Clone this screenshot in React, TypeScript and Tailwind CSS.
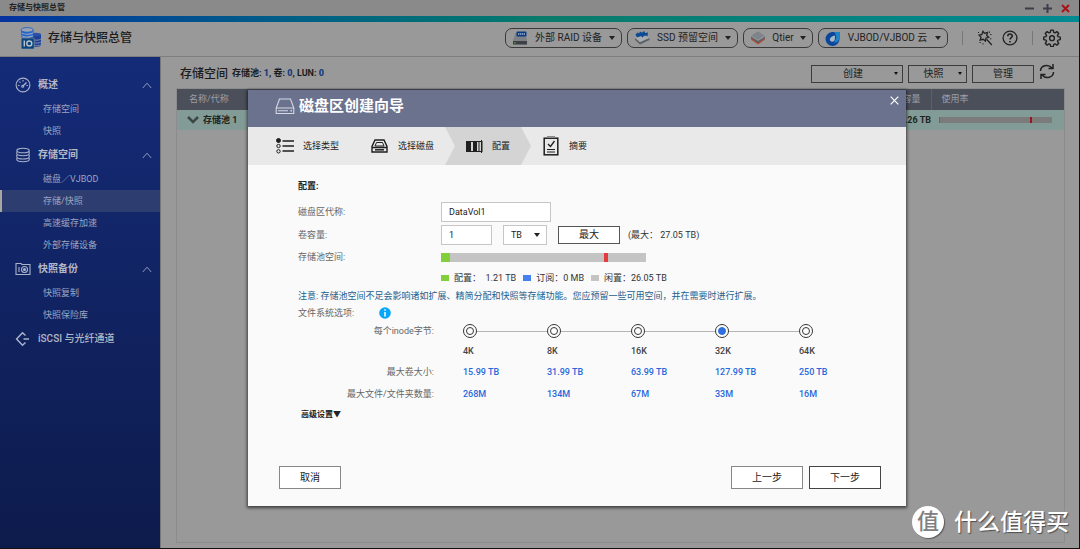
import React, { useState } from 'react';

/* ---------- icons ---------- */

const LogoIcon = () => (
  <svg width="22" height="23" viewBox="0 0 22 23" aria-hidden="true">
    <path d="M10 7v11c0 2.500 11 2.500 11 0V7z" fill="#1f3f94" />
    <ellipse cx="15.500" cy="7.500" rx="5.500" ry="1.800" fill="#2a4fa8" />
    <path d="M13 12.500c2 1 6 1 8-.5M14 15.500c2 .8 5 .8 7-.5M14 18.300c2 .8 5 .6 7-.6" stroke="#8793b3" fill="none" strokeWidth=".9" />
    <path d="M1 3v7.500h12.500V3z" fill="#2362c8" />
    <path d="M1.500 5.800c2 1.700 8 1.900 11.500.2M1.500 8.600c2 1.700 8 1.900 11.500.2" stroke="#97a9c4" fill="none" strokeWidth="1.100" />
    <ellipse cx="7.200" cy="2.900" rx="6.200" ry="2.300" fill="#9aa3b0" stroke="#2362c8" strokeWidth=".9" />
    <rect x="1.200" y="11" width="13" height="11" rx="1" fill="#08457c" stroke="#9098a2" strokeWidth=".6" />
    <path d="M4.300 13.500v6" stroke="#b9c2ca" strokeWidth="1.500" />
    <circle cx="9.300" cy="16.500" r="2.500" fill="none" stroke="#b9c2ca" strokeWidth="1.400" />
  </svg>
);

const GaugeIcon = () => (
  <svg width="16" height="16" viewBox="0 0 16 16" fill="none" stroke="#a9b2c9" strokeWidth="1.100" aria-hidden="true">
    <circle cx="8" cy="8" r="6.900" />
    <path d="M8 9l3.500-3.500" strokeWidth="1.400" />
    <circle cx="7.700" cy="9.300" r="1" />
    <path d="M3 8.500h1.500M4.500 4.700l1 1M8 3v1.400M11.500 8.500H13" />
  </svg>
);

const DiskStackIcon = () => (
  <svg width="16" height="16" viewBox="0 0 16 16" fill="none" stroke="#a9b2c9" strokeWidth="1.100" aria-hidden="true">
    <ellipse cx="8" cy="3.500" rx="6.200" ry="2.300" />
    <path d="M1.800 4.500v2c0 3 12.400 3 12.400 0v-2M1.800 7.800v2c0 3 12.400 3 12.400 0v-2M1.800 11v1.500c0 3 12.400 3 12.400 0V11" />
  </svg>
);

const SnapshotIcon = () => (
  <svg width="16" height="14" viewBox="0 0 16 14" fill="none" stroke="#a9b2c9" strokeWidth="1.100" aria-hidden="true">
    <path d="M1 12.500V1.500h5l1 1h8v10z" />
    <path d="M4 5v5" />
    <circle cx="9.500" cy="7.500" r="3" />
    <circle cx="9.500" cy="7.500" r="1" fill="#a9b2c9" />
  </svg>
);

const IscsiIcon = () => (
  <svg width="16" height="16" viewBox="0 0 16 16" fill="none" stroke="#a9b2c9" strokeWidth="1.500" aria-hidden="true">
    <path d="M10.500 4.500L7.500 1.800 1.600 8l5.900 6.200 3-2.700M8.500 8H14" />
  </svg>
);

const ChevronUp = () => (
  <svg width="10" height="7" viewBox="0 0 10 7" fill="none" stroke="#8d9abc" aria-hidden="true">
    <path d="M.8 6L5 1.200 9.200 6" />
  </svg>
);

const Caret = ({ className = '' }: { className?: string }) => (
  <svg width="6" height="4" viewBox="0 0 6 4" className={className} aria-hidden="true">
    <path d="M0 0h6L3 4z" fill="#222" />
  </svg>
);

const SmallCaret = () => (
  <svg width="4" height="3" viewBox="0 0 4 3" aria-hidden="true">
    <path d="M0 0h4L2 3z" fill="#111" />
  </svg>
);

const RaidIcon = () => (
  <svg width="16" height="14" viewBox="0 0 16 14" aria-hidden="true">
    <path d="M3.500 2h10L15 9.500v4H1v-4z" fill="#7d8187" />
    <path d="M1 10h14v3.500H1z" fill="#3d4145" />
    <rect x="4.500" y=".5" width="10" height="5" rx="1" fill="#0b3a80" />
    <path d="M6 3h7" stroke="#9fb2d0" strokeWidth="1.500" strokeDasharray="1.300 .6" />
    <path d="M2.200 11.800h1.500" stroke="#4fae35" strokeWidth="1.300" />
  </svg>
);

const SsdIcon = () => (
  <svg width="16" height="14" viewBox="0 0 16 14" aria-hidden="true">
    <path d="M1 9l5 4.500L15.500 9V7L6 11 1 7z" fill="#5d6268" />
    <path d="M1 6.500L9 5l6.500 1.500L6 11z" fill="#a9adb2" />
    <path d="M1.500 3.500l2-2 1.500 1 1-2 2 1.300L10 0l1.200 2L14 1.500 13.500 5l-3-.5-2 2-1.500-1.500L3 6.500z" fill="#0b4a94" />
  </svg>
);

const QtierIcon = () => (
  <svg width="16" height="14" viewBox="0 0 16 14" aria-hidden="true">
    <path d="M1 8.500L8 13.500l7-5V7L8 11.500 1 7z" fill="#b04a33" />
    <path d="M1 5.500v1.500l7 5 7-5V5.500L8 10z" fill="#5a5e65" />
    <path d="M1.500 4.500L8 .3l6.500 4.200L8 9z" fill="#7f838a" />
  </svg>
);

const VjbodIcon = () => (
  <svg width="15" height="15" viewBox="0 0 15 15" aria-hidden="true">
    <path d="M7 1h7.500v6.500A7 7 0 1 1 7 1z" fill="#0b459c" />
    <path d="M9 1h5.500v5c0 4-3 6-6 5.500C12 9 12 4 9 1z" fill="#1f83c4" />
    <path d="M10 4.500C6.500 5 4.500 7 5 9.300c.5 2 4 1.700 4.700-.3.400-1.500.3-3 .3-4.500z" fill="#a8b7c8" />
  </svg>
);

const WandIcon = () => (
  <svg width="16" height="16" viewBox="0 0 16 16" fill="none" stroke="#222" strokeWidth="1.300" aria-hidden="true">
    <path d="M6 1.300l1.500 2 3-.8-.8 2.800 2 2-2.700.8-.6 2.900-2.200-1.700-3 .8.900-2.800-2-2.200 2.800-.7zM9.800 9.500l5 5.500" />
    <path d="M12.500 1.500v1.300M14.500 4.500h-1.300M13 8.800h1.300M2.500 12.500h1.300M6 14.500v-1.300M1 2.500h1" strokeWidth="1" />
  </svg>
);

const HelpIcon = () => (
  <svg width="16" height="16" viewBox="0 0 16 16" fill="none" stroke="#222" strokeWidth="1.300" aria-hidden="true">
    <circle cx="8" cy="8" r="6.900" />
    <path d="M5.800 6.300c0-3 4.500-2.900 4.500-.2 0 1.500-2.300 1.700-2.300 3.500M8 11v1.500" strokeWidth="1.600" />
  </svg>
);

const GearIcon = () => (
  <svg width="18" height="18" viewBox="0 0 24 24" fill="none" stroke="#222" strokeWidth="1.900" strokeLinejoin="round" aria-hidden="true">
    <path d="M10.300 1.500h3.400l.6 3 1.700.7 2.600-1.700 2.400 2.400-1.700 2.600.7 1.700 3 .6v3.400l-3 .6-.7 1.700 1.700 2.600-2.400 2.400-2.600-1.700-1.700.7-.6 3h-3.400l-.6-3-1.700-.7-2.600 1.700L3 19.100l1.700-2.600-.7-1.700-3-.6v-3.400l3-.6.7-1.700L3 5.900l2.400-2.400L8 5.200l1.700-.7z" />
    <circle cx="12" cy="12.300" r="3.200" />
  </svg>
);

const RefreshIcon = () => (
  <svg width="16" height="17" viewBox="0 0 16 17" fill="none" stroke="#222" strokeWidth="1.500" aria-hidden="true">
    <path d="M1.500 8C1.500 2.500 9 .5 13 5M14 1v4.500H9.500M14.500 9c0 5.500-7.500 7.500-11.500 3M2 16v-4.500h4.500" />
  </svg>
);

const DriveIcon = () => (
  <svg width="20" height="17" viewBox="0 0 20 17" fill="none" stroke="#d5d9e6" strokeWidth="1.100" aria-hidden="true">
    <path d="M4.500 1h11l3.300 9v5.500H1.200V10zM1.200 10h17.600M3 12.800h10" />
    <path d="M15.500 12.800h1.500" strokeWidth="1.500" />
  </svg>
);

const ListIcon = () => (
  <svg width="18" height="16" viewBox="0 0 18 16" fill="none" stroke="#1f1f1f" aria-hidden="true">
    <circle cx="2.500" cy="2.500" r="2" fill="#1f1f1f" />
    <circle cx="2.500" cy="8" r="1.700" />
    <circle cx="2.500" cy="13.300" r="1.700" />
    <path d="M6.500 3H18M6.500 8H18M6.500 13H18" strokeWidth="1.600" />
  </svg>
);

const DiskSelectIcon = () => (
  <svg width="17" height="14" viewBox="0 0 17 14" fill="none" stroke="#1f1f1f" strokeWidth="1.400" aria-hidden="true">
    <path d="M4 1h9l3 6.500V13H1V7.500zM1 8.500h15" />
    <path d="M5.500 3.500h6l1.500 3.500H4z" strokeWidth="1" />
    <path d="M4 10.800h9" strokeWidth="1.500" />
  </svg>
);

const ConfigIcon = () => (
  <svg width="19" height="13" viewBox="0 0 19 13" aria-hidden="true">
    <rect x="1.500" y="1.500" width="15.500" height="10" fill="none" stroke="#1f1f1f" />
    <path d="M1 1h5v11H1zM8 1h4v11H8z" fill="#1f1f1f" />
    <path d="M14 1.500v10M16.500 0v13" stroke="#1f1f1f" strokeWidth="1" />
  </svg>
);

const SummaryIcon = () => (
  <svg width="16" height="20" viewBox="0 0 16 20" fill="none" stroke="#1f1f1f" aria-hidden="true">
    <rect x="1.200" y="2.200" width="13.600" height="16.600" strokeWidth="1.500" />
    <path d="M4 1h8" stroke="#8a8a8a" strokeWidth="2" />
    <path d="M5 8l2.500 2.500L11.500 5" strokeWidth="1.300" />
    <path d="M4 13.500h8M4 16h8" />
  </svg>
);

/* ---------- data ---------- */

const navGroups = [
  { title: '概述', icon: <GaugeIcon />, items: ['存储空间', '快照'], bold: true },
  { title: '存储空间', icon: <DiskStackIcon />, items: ['磁盘／VJBOD', '存储/快照', '高速缓存加速', '外部存储设备'], bold: true },
  { title: '快照备份', icon: <SnapshotIcon />, items: ['快照复制', '快照保险库'], bold: true },
  { title: 'iSCSI 与光纤通道', icon: <IscsiIcon />, items: [], bold: false },
];

const tools = [
  { label: '外部 RAID 设备', icon: <RaidIcon />, width: 'w-[117px]' },
  { label: 'SSD 预留空间', icon: <SsdIcon />, width: 'w-[111px]' },
  { label: 'Qtier', icon: <QtierIcon />, width: 'w-[70px]' },
  { label: 'VJBOD/VJBOD 云', icon: <VjbodIcon />, width: 'w-[130px]' },
];

const inodes = [
  { size: '4K', volume: '15.99 TB', files: '268M' },
  { size: '8K', volume: '31.99 TB', files: '134M' },
  { size: '16K', volume: '63.99 TB', files: '67M' },
  { size: '32K', volume: '127.99 TB', files: '33M' },
  { size: '64K', volume: '250 TB', files: '16M' },
];

const legend = [
  { label: '配置：  1.21 TB', color: 'bg-[#82cf3c]' },
  { label: '订阅：0 MB', color: 'bg-[#4480f0]' },
  { label: '闲置：26.05 TB', color: 'bg-[#c4c4c4]' },
];

/* ---------- page parts ---------- */

const TitleBar = () => (
  <div className="flex h-4 shrink-0 items-center bg-[#8a8a8a] pr-[9px] pl-[9px] text-[8px] font-bold text-[#222]">
    <span>存储与快照总管</span>
    <div className="ml-auto flex items-center gap-2">
      <button aria-label="最小化" className="flex size-[10px] items-center justify-center">
        <svg width="9" height="9" viewBox="0 0 9 9" stroke="#3c3f4a" strokeWidth="2"><path d="M0 4.500h9" /></svg>
      </button>
      <button aria-label="最大化" className="flex size-[10px] items-center justify-center">
        <svg width="9" height="9" viewBox="0 0 9 9" stroke="#3c3f4a" strokeWidth="2"><path d="M0 4.500h9M4.500 0v9" /></svg>
      </button>
      <button aria-label="关闭" className="flex size-[10px] items-center justify-center">
        <svg width="9" height="9" viewBox="0 0 9 9" stroke="#a8141c" strokeWidth="2"><path d="M1 1l7 7M8 1L1 8" /></svg>
      </button>
    </div>
  </div>
);

const Header = () => (
  <header className="flex h-[35px] shrink-0 items-center border-b border-[#7e7e7e] pr-[18px] pb-[2px] pl-5">
    <LogoIcon />
    <h1 className="ml-[6px] text-[12px] font-medium text-[#1c1c1c]">存储与快照总管</h1>
    <div className="ml-auto flex items-center gap-[5px]">
      {tools.map((t) => (
        <button
          key={t.label}
          className={`flex h-5 items-center justify-between rounded-[7px] border border-[#3a3a3a] pr-[6px] pl-[6px] text-[10px] text-[#222] ${t.width}`}
        >
          {t.icon}
          <span>{t.label}</span>
          <Caret />
        </button>
      ))}
    </div>
    <div className="ml-[14px] flex items-center">
      <span className="h-[14px] w-px bg-[#777]" />
      <button aria-label="向导" className="ml-[14px]"><WandIcon /></button>
      <button aria-label="帮助" className="ml-[9px]"><HelpIcon /></button>
      <span className="ml-[14px] h-[14px] w-px bg-[#777]" />
      <button aria-label="设置" className="ml-[10px]"><GearIcon /></button>
    </div>
  </header>
);

const Sidebar = () => (
  <nav className="flex w-40 shrink-0 flex-col gap-px bg-linear-to-b from-[#142b78] to-[#0d1b4c] pt-4">
    {navGroups.map((g) => (
      <section key={g.title}>
        <button className="mb-px flex h-6 w-full items-center pr-2 pl-[15px] text-[#b3b8c6]">
          <span className="flex w-4">{g.icon}</span>
          <span className={`ml-[7px] text-[10px] ${g.bold ? 'font-bold' : 'font-medium'}`}>{g.title}</span>
          {g.items.length > 0 && <span className="ml-auto"><ChevronUp /></span>}
        </button>
        {g.items.map((item) => (
          <a
            key={item}
            href="#"
            className={`flex h-[22px] items-center border-l-2 pl-[41px] text-[9px] text-[#9ba5c2] ${
              item === '存储/快照' ? 'border-[#a8a8a0] bg-[#2d3d70]' : 'border-transparent'
            }`}
          >
            {item}
          </a>
        ))}
      </section>
    ))}
  </nav>
);

const outline = 'flex items-center justify-center border border-[#3c3c3c] text-[10px] text-[#222]';

const Content = () => (
  <main className="flex min-w-0 flex-1 flex-col border-l border-[#777] pr-[14px] pb-[5px] pl-[15px]">
    <div className="flex h-[31px] shrink-0 items-center pt-[2px] pl-1 text-[#1c1c1c]">
      <h2 className="text-[12px] font-medium">存储空间</h2>
      <p className="ml-1 text-[9px] font-bold">
        存储池: <b className="text-[#173f78]">1</b>, 卷: <b className="text-[#173f78]">0</b>, LUN: <b className="text-[#173f78]">0</b>
      </p>
      <div className="ml-auto flex items-center gap-[5px] pr-[10px]">
        <button className={`${outline} h-[18px] w-[92px] pr-1`}>
          <span className="flex-1">创建</span>
          <SmallCaret />
        </button>
        <button className={`${outline} h-[18px] w-[59px] pr-1`}>
          <span className="flex-1">快照</span>
          <SmallCaret />
        </button>
        <button className={`${outline} h-[18px] w-[62px]`}>管理</button>
        <button aria-label="刷新" className="-mt-1"><RefreshIcon /></button>
      </div>
    </div>
    <div className="flex-1 border border-[#8c8c8c]">
      <table className="w-full table-fixed text-left text-[9px]">
        <thead className="bg-[#4b4f5a] text-[#9c9fa8]">
          <tr className="h-[21px]">
            <th className="pl-3 font-normal">名称/代称</th>
            <th className="w-[75px] pr-[10px] text-right font-normal">总容量</th>
            <th className="w-[133px] border-l border-[#5c606c] pl-[10px] font-normal">使用率</th>
          </tr>
        </thead>
        <tbody className="bg-[#839b97] font-bold text-[#1d2422]">
          <tr className="h-5">
            <td className="pl-[10px]">
              <span className="flex items-center gap-1">
                <svg width="12" height="8" viewBox="0 0 12 8" fill="none" stroke="#3b4846" strokeWidth="2.500" aria-hidden="true">
                  <path d="M1 1l5 5 5-5" />
                </svg>
                存储池 1
              </span>
            </td>
            <td className="text-right">27.26 TB</td>
            <td className="pr-3 pl-2">
              <div className="flex h-[6px] bg-[#7b7b7b]">
                <span className="w-px bg-[#4f7d2a]" />
                <span className="w-4/5" />
                <span className="w-[2px] bg-[#a3121a]" />
              </div>
            </td>
          </tr>
        </tbody>
      </table>
    </div>
  </main>
);

const stepClass = 'flex items-center text-[9px] text-[#222]';
const formLabel = 'w-[143px] shrink-0 text-[#666]';
const field = 'h-5 border border-[#c6c6c6] bg-white text-[9px] text-[#222]';
const action = 'h-[23px] border bg-white text-[10px] text-[#222]';

const Wizard = () => {
  const [inode, setInode] = useState('32K');
  const [name, setName] = useState('DataVol1');
  const [capacity, setCapacity] = useState('1');

  return (
    <section role="dialog" aria-label="磁盘区创建向导" className="flex min-h-[416px] w-full flex-col bg-[#fafafa] shadow-[0_1px_3px_1px_rgba(0,0,0,0.6)]">
      <header className="flex h-[37px] items-center bg-[#6b728e] pr-[7px] pb-1 pl-[27px] text-white">
        <DriveIcon />
        <h2 className="ml-1 text-[15px] font-bold">磁盘区创建向导</h2>
        <button aria-label="关闭向导" className="ml-auto -mt-3">
          <svg width="9" height="9" viewBox="0 0 9 9" stroke="#fff" strokeWidth="1.200"><path d="M.7.7l7.600 7.600M8.300.7L.7 8.300" /></svg>
        </button>
      </header>

      <ol className="flex h-[38px] bg-[#e9e9e9]">
        <li className={`${stepClass} w-[123px] gap-[9px] pl-[28px]`}><ListIcon />选择类型</li>
        <li className={`${stepClass} w-[74px] gap-[10px]`}><DiskSelectIcon />选择磁盘</li>
        <li aria-current="step" className={`${stepClass} w-[86px] gap-2 bg-[#d4d4d4] pl-5 [clip-path:polygon(0_0,76px_0,100%_50%,76px_100%,0_100%,10px_50%)]`}>
          <ConfigIcon />配置
        </li>
        <li className={`${stepClass} gap-[10px] pl-3`}><SummaryIcon />摘要</li>
      </ol>

      <form className="flex flex-1 flex-col pt-[13px] text-[9px]" onSubmit={(e) => e.preventDefault()}>
        <div className="flex flex-col pl-[50px]">
          <h3 className="h-4 font-bold leading-4 text-[#222]">配置:</h3>

          <div className="mt-2 flex h-5 items-center">
            <label htmlFor="vol-name" className={formLabel}>磁盘区代称:</label>
            <input id="vol-name" value={name} onChange={(e) => setName(e.target.value)} className={`${field} w-[110px] px-[7px]`} />
          </div>

          <div className="mt-[3px] flex h-5 items-center">
            <label htmlFor="vol-cap" className={formLabel}>卷容量:</label>
            <input id="vol-cap" value={capacity} onChange={(e) => setCapacity(e.target.value)} className={`${field} w-[51px] px-[7px]`} />
            <div className="ml-[11px] grid w-11 items-center">
              <select aria-label="容量单位" defaultValue="TB" className={`${field} col-start-1 row-start-1 w-full appearance-none px-[7px]`}>
                <option>TB</option>
                <option>GB</option>
              </select>
              <Caret className="pointer-events-none col-start-1 row-start-1 mr-[7px] justify-self-end" />
            </div>
            <button type="button" className="ml-[11px] h-[18px] w-[62px] border border-[#555] bg-white text-[10px] text-[#222]">最大</button>
            <span className="ml-2 text-[#333]">(最大： 27.05 TB)</span>
          </div>

          <div className="mt-[2px] flex h-5 items-center">
            <span className={formLabel}>存储池空间:</span>
            <div className="flex h-[9px] w-[205px] bg-[#c4c4c4]">
              <span className="w-[9px] bg-[#82cf3c]" />
              <span className="w-[154px]" />
              <span className="w-1 bg-[#e23c3c]" />
            </div>
          </div>

          <ul className="mt-px flex h-5 items-center gap-[7px] pl-[143px] text-[#333]">
            {legend.map((l) => (
              <li key={l.label} className="flex items-center gap-[5px] whitespace-pre">
                <span className={`h-[6px] w-2 ${l.color}`} />
                {l.label}
              </li>
            ))}
          </ul>

          <p className="h-[17px] leading-[17px] whitespace-nowrap text-[#1c5f8f]">
            注意: 存储池空间不足会影响诸如扩展、精简分配和快照等存储功能。您应预留一些可用空间，并在需要时进行扩展。
          </p>

          <div className="flex h-4 items-center text-[#666]">
            文件系统选项:
            <svg width="12" height="12" viewBox="0 0 12 12" className="ml-[25px]" aria-hidden="true">
              <circle cx="6" cy="6" r="5.800" fill="#08a6f8" />
              <path d="M6 2.200v1.600M6 5v4.500" stroke="#fff" strokeWidth="1.500" />
            </svg>
          </div>

          <table className="w-[585px] table-fixed text-left">
            <colgroup>
              <col className="w-[165px]" />
              <col span={5} className="w-[84px]" />
            </colgroup>
            <tbody>
              <tr className="h-5">
                <th className="pr-[29px] text-right font-normal text-[#666]">每个inode字节:</th>
                {inodes.map((n, i) => (
                  <td key={n.size}>
                    <div className="flex items-center">
                      <input
                        type="radio"
                        name="inode"
                        id={`inode-${n.size}`}
                        checked={inode === n.size}
                        onChange={() => setInode(n.size)}
                        className="flex size-[14px] shrink-0 appearance-none items-center justify-center rounded-full border border-[#333] bg-white before:size-2 before:rounded-full before:border before:border-[#333] checked:before:border-[#2e6fe0] checked:before:bg-[#2e6fe0]"
                      />
                      {i < inodes.length - 1 && <span className="h-px flex-1 bg-[#b5b5b5]" />}
                    </div>
                  </td>
                ))}
              </tr>
              <tr className="h-5">
                <td />
                {inodes.map((n) => (
                  <td key={n.size} className="font-medium text-[#444]">
                    <label htmlFor={`inode-${n.size}`}>{n.size}</label>
                  </td>
                ))}
              </tr>
              <tr className="h-[22px]">
                <th className="pr-[29px] text-right font-normal text-[#666]">最大卷大小:</th>
                {inodes.map((n) => (
                  <td key={n.size} className="font-medium text-[#2767dc]">{n.volume}</td>
                ))}
              </tr>
              <tr className="h-[22px]">
                <th className="pr-[29px] text-right font-normal text-[#666]">最大文件/文件夹数量:</th>
                {inodes.map((n) => (
                  <td key={n.size} className="font-medium text-[#2767dc]">{n.files}</td>
                ))}
              </tr>
            </tbody>
          </table>

          <button type="button" className="ml-[3px] h-5 self-start text-[8px] font-bold text-[#222]">高级设置▼</button>
        </div>

        <footer className="mt-auto flex gap-[6px] pr-[25px] pb-[17px] pl-[31px]">
          <button type="button" className={`${action} mr-auto w-[62px] border-[#888]`}>取消</button>
          <button type="button" className={`${action} w-[72px] border-[#888]`}>上一步</button>
          <button type="submit" className={`${action} w-[72px] border-[#444]`}>下一步</button>
        </footer>
      </form>
    </section>
  );
};

const Watermark = () => (
  <div className="absolute right-[10px] bottom-[10px] flex items-center gap-[10px] text-white">
    <span className="flex size-8 items-center justify-center rounded-full bg-white text-[22px] font-medium text-[#808080] shadow-[1px_1px_1px_rgba(0,0,0,0.4)]">
      值
    </span>
    <span className="text-[23px] font-medium text-shadow-[1px_1px_1px_rgba(0,0,0,0.5)]">什么值得买</span>
  </div>
);

export default function App() {
  return (
    <div className="relative flex min-h-screen flex-col border-r border-b border-[#111] bg-[#999] font-[Roboto,'Noto_Sans_CJK_SC',sans-serif] leading-none">
      <TitleBar />
      <div className="h-[6px] shrink-0 bg-linear-to-r from-[#08329f] via-[#0a7a6a] to-[#008a92]" />
      <Header />
      <div className="flex flex-1">
        <Sidebar />
        <Content />
      </div>
      <div className="absolute inset-x-0 top-0 pt-[90px] pr-[173px] pl-[248px]">
        <Wizard />
      </div>
      <Watermark />
    </div>
  );
}
